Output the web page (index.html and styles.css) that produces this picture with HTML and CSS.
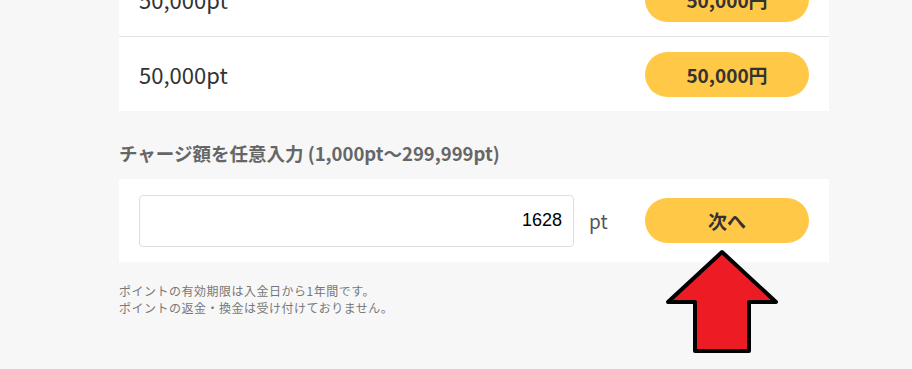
FILE: index.html
```html
<!DOCTYPE html>
<html lang="ja">
<head>
    <meta charset="UTF-8">
    <title>ポイントチャージ</title>
    <link rel="stylesheet" href="styles.css">
</head>
<body>
    <div class="page">
        <ul class="plans">
            <li class="plan">
                <span class="plan-pt">50,000pt</span>
                <button class="btn">50,000円</button>
            </li>
            <li class="plan">
                <span class="plan-pt">50,000pt</span>
                <button class="btn">50,000円</button>
            </li>
        </ul>
        <h2 class="free-title">チャージ額を任意入力 (1,000pt〜299,999pt)</h2>
        <div class="free-input">
            <input type="text" value="1628">
            <span class="unit">pt</span>
            <button class="btn">次へ</button>
        </div>
        <p class="notes">
            ポイントの有効期限は入金日から1年間です。<br>
            ポイントの返金・換金は受け付けておりません。
        </p>
        <!-- 注目用の矢印 -->
        <svg class="arrow" viewBox="0 0 120 110">
            <polygon points="56,3 110,53 83,53 83,102 29,102 29,53 2,53" fill="#ed1c24" stroke="#000" stroke-width="4" stroke-linejoin="round"/>
        </svg>
    </div>
</body>
</html>
```

FILE: styles.css
```css
* {
    margin: 0;
    padding: 0;
    box-sizing: border-box;
}
html, body {
    min-height: 100%;
}
body {
    background: #f7f7f7;
    font-family: "Noto Sans CJK JP", "Noto Sans", sans-serif;
    color: #333;
}
.page {
    position: relative;
    width: 710px;
    margin: -38px 0 0 119px;
    padding-bottom: 48px;
}
.plans {
    list-style: none;
    background: #fff;
}
.plan {
    height: 74px;
    padding: 0 20px 0 20px;
    display: flex;
    align-items: center;
    justify-content: space-between;
}
.plan + .plan {
    border-top: solid 1px #e2e2e2;
    height: 75px;
}
.plan-pt {
    font-size: 22px;
    color: #333;
}
.btn {
    width: 164px;
    height: 45px;
    border: none;
    border-radius: 23px;
    background: #ffc846;
    font-family: inherit;
    font-size: 19px;
    font-weight: bold;
    color: #333;
}
.free-title {
    margin: 30px 0 0;
    height: 38px;
    font-size: 18.5px;
    line-height: 24px;
    font-weight: bold;
    color: #666;
}
.free-input {
    background: #fff;
    height: 83px;
    padding: 0 20px;
    display: flex;
    align-items: center;
}
.free-input input {
    width: 435px;
    height: 52px;
    border: solid 1px #dedede;
    border-radius: 4px;
    padding: 0 11px;
    text-align: right;
    font-family: "Liberation Sans", Arial, sans-serif;
    font-size: 18px;
    color: #000;
}
.unit {
    margin-left: 15px;
    font-size: 19px;
    color: #555;
    flex: 1;
}
.notes {
    margin-top: 20px;
    font-size: 12px;
    line-height: 17px;
    letter-spacing: 0.5px;
    color: #777;
}
.arrow {
    position: absolute;
    left: 547px;
    top: 287px;
    width: 120px;
    height: 110px;
}
```
